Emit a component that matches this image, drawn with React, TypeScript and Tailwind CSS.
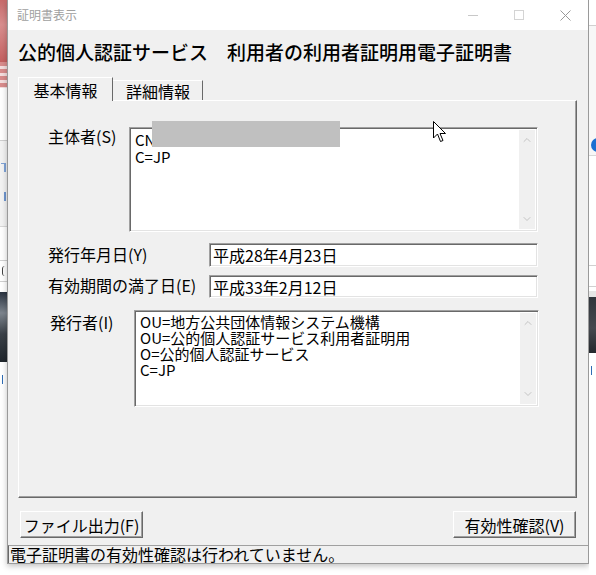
import { ChevronDown, ChevronUp } from "lucide-react";

const sunken =
  "border border-t-[#a0a0a0] border-l-[#a0a0a0] border-b-white border-r-white shadow-[inset_1px_1px_0_#696969,inset_-1px_-1px_0_#e3e3e3] bg-white";

const raisedBtn =
  "border border-t-white border-l-white border-b-[#696969] border-r-[#696969] shadow-[inset_-1px_-1px_0_#a0a0a0] bg-[#f0f0f0]";

function ScrollGutter() {
  return (
    <div className="flex h-full w-[16px] flex-col items-center justify-between bg-[#f0f0f0] py-[4px] text-[#c4c4c4]">
      <ChevronUp size={12} strokeWidth={2} />
      <ChevronDown size={12} strokeWidth={2} />
    </div>
  );
}

function LeftStrip() {
  return (
    <div className="flex w-[7px] flex-none flex-col">
      <div className="h-[62px] bg-[linear-gradient(180deg,#c76b6b,#d98f8f_40%,#c56060)]" />
      <div className="h-[26px] bg-[repeating-linear-gradient(180deg,#d88c8c_0_4px,#f4dede_4px_7px)]" />
      <div className="h-[52px] bg-white" />
      <div className="h-[86px] border-t border-[#cfcfcf] bg-[#f3f3f3]">
        <div className="ml-[1px] mt-[22px] h-[9px] w-[5px] border-r-2 border-t border-[#7fa3d6]" />
        <div className="ml-[1px] mt-[20px] h-[9px] w-[5px] border-r-2 border-[#6f96cf]" />
      </div>
      <div className="h-[34px] border-t border-[#d8d8d8] bg-white" />
      <div className="h-[22px] border-y border-[#d0d0d0] bg-white">
        <div className="ml-[2px] mt-[5px] h-[10px] w-[3px] rounded-l-full border-l border-[#444]" />
      </div>
      <div className="h-[10px] bg-white" />
      <div className="h-[70px] bg-[linear-gradient(180deg,#2a3340,#7d858e_30%,#3b4148_60%,#20262c)]" />
      <div className="h-[30px] bg-white">
        <div className="ml-[2px] mt-[13px] h-[9px] w-px bg-[#2f6db5]" />
      </div>
      <div className="flex-1 bg-white" />
    </div>
  );
}

function RightStrip() {
  return (
    <div className="flex flex-1 flex-col">
      <div className="h-[25px] bg-white" />
      <div className="h-[110px] border-t border-[#d0d0d0] bg-[#f7f7f7]" />
      <div className="flex h-[20px] items-center bg-[#f7f7f7]">
        <div className="ml-[2px] h-[14px] w-[14px] rounded-full bg-[#1b6fd1]" />
      </div>
      <div className="h-[110px] border-t border-[#d8d8d8] bg-white" />
      <div className="h-[22px] border-y border-[#d0d0d0] bg-white" />
      <div className="h-[4px] bg-white" />
      <div className="h-[62px] bg-[linear-gradient(180deg,#e6e6e6_0_6px,#30353b_6px,#45494f_60%,#24282d)]" />
      <div className="h-[30px] bg-white">
        <div className="ml-[2px] mt-[13px] h-[9px] w-px bg-[#2f6db5]" />
      </div>
      <div className="flex-1 bg-white" />
    </div>
  );
}

function TitleBar() {
  return (
    <div className="flex h-[30px] flex-none items-center bg-white">
      <span className="pl-[9px] text-[12px] leading-[14px] text-[#a0a0a0]">証明書表示</span>
      <div className="ml-auto flex h-full">
        <div className="flex h-full w-[46px] items-center justify-center">
          <div className="h-px w-[10px] bg-[#c8c8c8]" />
        </div>
        <div className="flex h-full w-[46px] items-center justify-center">
          <div className="h-[10px] w-[10px] border border-[#d4d4d4]" />
        </div>
        <div className="flex h-full w-[46px] items-center justify-center">
          <svg width="11" height="11" viewBox="0 0 11 11">
            <path d="M0.5 0.5 L10.5 10.5 M10.5 0.5 L0.5 10.5" stroke="#999" strokeWidth="1" fill="none" />
          </svg>
        </div>
      </div>
    </div>
  );
}

function Cursor() {
  return (
    <svg
      className="absolute left-[433px] top-[121px]"
      width="13"
      height="22"
      viewBox="0 0 13 22"
    >
      <path
        d="M0.5 0.5 L0.5 17 L4.5 13 L7.5 20.5 L10 19.5 L7 12.5 L12.5 12.5 Z"
        fill="white"
        stroke="black"
        strokeWidth="1"
        strokeLinejoin="miter"
      />
    </svg>
  );
}

export default function App() {
  return (
    <div className="relative flex h-[575px] w-[596px] overflow-hidden bg-white font-['Noto_Sans_CJK_JP',sans-serif] text-black">
      <LeftStrip />

      <div className="flex h-[564px] w-[582px] flex-none flex-col border-x border-b border-[#9a9a9a] bg-[#f0f0f0] shadow-[0_2px_6px_rgba(0,0,0,0.25)]">
        <TitleBar />

        <div className="flex flex-1 flex-col">
          <h1 className="pl-[10px] pt-[10px] text-[19px] font-medium leading-[24px]">
            公的個人認証サービス　利用者の利用者証明用電子証明書
          </h1>

          {/* tabs */}
          <div className="mt-[13px] flex items-end pl-[10px]">
            <div className="relative z-10 -mb-px flex h-[24px] w-[95px] items-center justify-center border-l border-t border-r border-l-white border-t-white border-r-[#696969] bg-[#f0f0f0] text-[16px] leading-[18px]">
              基本情報
            </div>
            <div className="flex h-[20px] w-[90px] items-center border-t border-r border-t-white border-r-[#696969] pl-[13px] text-[16px] leading-[18px]">
              詳細情報
            </div>
          </div>

          {/* panel */}
          <div className="ml-[10px] flex h-[398px] w-[559px] flex-col border border-t-white border-l-white border-b-[#696969] border-r-[#696969] pt-[26px] shadow-[inset_-1px_-1px_0_#a0a0a0]">
            <div className="flex">
              <span className="ml-[29px] w-[81px] text-[16px] leading-[18px]">主体者(S)</span>
              <div className={`flex h-[105px] w-[409px] ${sunken}`}>
                <div className="relative flex-1 pl-[5px] pt-[3px] text-[15px] leading-[17px]">
                  <div>CN=</div>
                  <div>C=JP</div>
                  <div className="absolute left-[22px] top-[-7px] h-[26px] w-[188px] bg-[#c0c0c0]" />
                </div>
                <div className="py-[2px] pr-[2px]">
                  <ScrollGutter />
                </div>
              </div>
            </div>

            <div className="mt-[11px] flex items-center">
              <span className="ml-[29px] -mt-[3px] w-[161px] text-[16px] leading-[18px]">発行年月日(Y)</span>
              <div className={`flex h-[24px] w-[329px] items-center pl-[3px] text-[16px] leading-[18px] ${sunken}`}>
                平成28年4月23日
              </div>
            </div>

            <div className="mt-[8px] flex items-center">
              <span className="ml-[29px] -mt-[3px] w-[161px] text-[16px] leading-[18px]">有効期間の満了日(E)</span>
              <div className={`flex h-[23px] w-[329px] items-center pl-[3px] text-[16px] leading-[18px] ${sunken}`}>
                平成33年2月12日
              </div>
            </div>

            <div className="mt-[12px] flex">
              <span className="ml-[31px] mt-[3px] w-[84px] text-[16px] leading-[18px]">発行者(I)</span>
              <div className={`flex h-[97px] w-[405px] ${sunken}`}>
                <div className="flex-1 pl-[5px] pt-[3px] text-[15px] leading-[16px]">
                  <div>OU=地方公共団体情報システム機構</div>
                  <div>OU=公的個人認証サービス利用者証明用</div>
                  <div>O=公的個人認証サービス</div>
                  <div>C=JP</div>
                </div>
                <div className="py-[2px] pr-[2px]">
                  <ScrollGutter />
                </div>
              </div>
            </div>
          </div>

          {/* buttons */}
          <div className="mt-[13px] flex justify-between pl-[12px] pr-[12px]">
            <button className={`h-[27px] w-[123px] text-[16px] leading-[18px] ${raisedBtn}`}>
              ファイル出力(F)
            </button>
            <button className={`h-[27px] w-[123px] text-[16px] leading-[18px] ${raisedBtn}`}>
              有効性確認(V)
            </button>
          </div>

          <div className="mt-auto flex h-[18px] items-center border-l border-t border-l-[#696969] border-t-[#a0a0a0] pl-px text-[16px] leading-[17px]">
            電子証明書の有効性確認は行われていません。
          </div>
        </div>
      </div>

      <RightStrip />
      <Cursor />
    </div>
  );
}
